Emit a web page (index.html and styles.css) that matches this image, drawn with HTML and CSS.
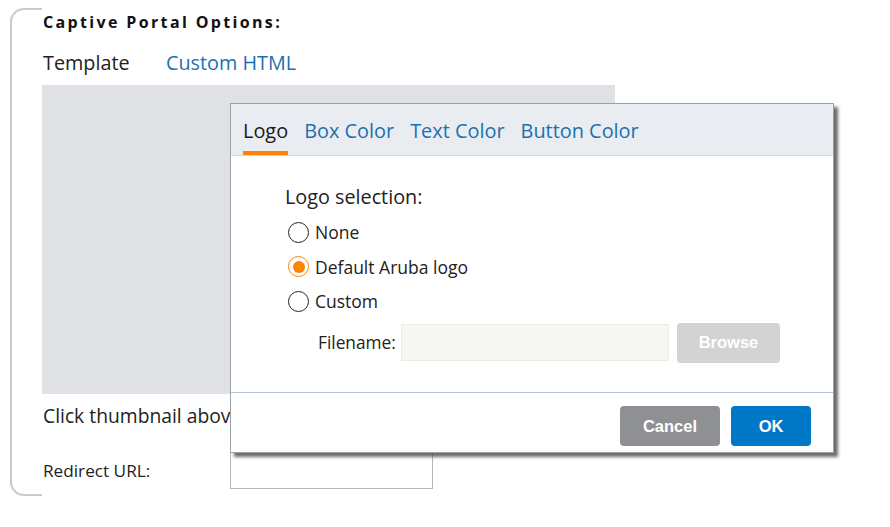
FILE: index.html
```html
<!DOCTYPE html>
<html>
<head>
<meta charset="utf-8">
<link rel="stylesheet" href="styles.css">
</head>
<body>
<div class="page">
  <section class="options">
    <h2 class="title">Captive Portal Options:</h2>
    <div class="template-row">
      <span class="label">Template</span>
      <a class="link">Custom HTML</a>
    </div>
    <div class="thumb"></div>
    <p class="hint">Click thumbnail above to customize the captive portal page.</p>
    <div class="redirect-row">
      <span class="small-label">Redirect URL:</span>
      <div class="url-input"></div>
    </div>
  </section>

  <div class="dialog">
    <div class="tabs">
      <span class="tab active">Logo</span>
      <span class="tab">Box Color</span>
      <span class="tab">Text Color</span>
      <span class="tab">Button Color</span>
    </div>
    <div class="dialog-body">
      <div class="heading">Logo selection:</div>
      <div class="radio-row"><span class="radio"></span><span>None</span></div>
      <div class="radio-row"><span class="radio checked"></span><span>Default Aruba logo</span></div>
      <div class="radio-row"><span class="radio"></span><span>Custom</span></div>
      <div class="file-row">
        <span class="file-label">Filename:</span>
        <div class="file-input"></div>
        <span class="btn btn-browse">Browse</span>
      </div>
    </div>
    <div class="dialog-footer">
      <span class="btn btn-cancel">Cancel</span>
      <span class="btn btn-ok">OK</span>
    </div>
  </div>
</div>
</body>
</html>
```
FILE: styles.css
```css
html, body {
  margin: 0;
  padding: 0;
  background: #ffffff;
}
body {
  font-family: "Open Sans", "Noto Sans", sans-serif;
  color: #222222;
  width: 890px;
  height: 527px;
  overflow: hidden;
}
.page {
  position: relative;
  width: 890px;
  height: 527px;
}
.options {
  position: relative;
  margin: 0;
  padding: 11px 0 0 43px;
  width: 572px;
  height: 484px;
  box-sizing: content-box;
}
.options::before {
  content: "";
  position: absolute;
  left: 10px;
  top: 8px;
  width: 32px;
  height: 488px;
  border: 2px solid #c9cacd;
  border-right: none;
  border-radius: 14px 0 0 14px;
  box-sizing: border-box;
}
.title {
  margin: 0;
  font-size: 16px;
  font-weight: 700;
  letter-spacing: 2.35px;
  line-height: 22px;
  color: #111111;
}
.template-row {
  display: flex;
  align-items: baseline;
  margin-top: 18px;
  height: 30px;
  font-size: 19.8px;
  line-height: 24px;
}
.label {
  width: 123px;
  color: #222222;
}
.link {
  color: #1c70ae;
}
.thumb {
  margin-top: 4px;
  margin-left: -1px;
  width: 573px;
  height: 309px;
  background: #e0e1e5;
}
.hint {
  margin: 10px 0 0 0;
  font-size: 19.3px;
  line-height: 24px;
  white-space: nowrap;
  color: #222222;
}
.redirect-row {
  display: flex;
  align-items: center;
  margin-top: 25px;
  height: 36px;
}
.small-label {
  font-size: 17.2px;
  line-height: 22px;
  padding-bottom: 1px;
  width: 187px;
}
.url-input {
  width: 203px;
  height: 36px;
  border: 1px solid #b3b6bc;
  border-top: none;
  box-sizing: border-box;
}
.dialog {
  position: absolute;
  left: 230px;
  top: 103px;
  width: 604px;
  height: 350px;
  background: #ffffff;
  border: 1px solid #9ba1a8;
  box-sizing: border-box;
  box-shadow: 4px 4px 3px rgba(60, 60, 60, 0.75);
  display: flex;
  flex-direction: column;
}
.tabs {
  display: flex;
  align-items: flex-end;
  gap: 16px;
  height: 51px;
  padding-left: 12px;
  background: #e9ecf1;
  border-bottom: 1px solid #d4d8dd;
  font-size: 19.9px;
}
.tab {
  color: #1c70ae;
  line-height: 24px;
  padding-bottom: 8px;
  border-bottom: 4px solid transparent;
}
.tab.active {
  color: #1a1a1a;
  border-bottom-color: #ff8300;
}
.dialog-body {
  flex: 1;
  padding: 28px 0 0 54px;
  border-bottom: 1px solid #b6c3d1;
}
.heading {
  font-size: 19.8px;
  line-height: 26px;
  color: #222222;
  margin-bottom: 5px;
}
.radio-row {
  display: flex;
  align-items: center;
  gap: 6px;
  height: 34.5px;
  margin-left: 3px;
  font-size: 17.5px;
  color: #222222;
}
.radio {
  width: 21px;
  height: 21px;
  border: 1.3px solid #222222;
  border-radius: 50%;
  box-sizing: border-box;
  display: flex;
  align-items: center;
  justify-content: center;
  background: #ffffff;
}
.radio.checked {
  border-color: #ff8300;
  border-width: 1px;
}
.radio.checked::after {
  content: "";
  width: 12px;
  height: 12px;
  border-radius: 50%;
  background: #ff8300;
}
.file-row {
  display: flex;
  align-items: center;
  margin-top: 4px;
  margin-left: 33px;
}
.file-label {
  font-size: 17.3px;
  width: 83px;
}
.file-input {
  width: 268px;
  height: 37px;
  background: #f6f7f3;
  border: 1px solid #ebebe8;
  box-sizing: border-box;
}
.btn {
  display: flex;
  align-items: center;
  justify-content: center;
  font-family: "Liberation Sans", Arial, sans-serif;
  font-weight: 700;
  font-size: 16.5px;
  color: #ffffff;
  border-radius: 4px;
}
.btn-browse {
  margin-left: 8px;
  width: 103px;
  height: 40px;
  background: #d2d3d5;
}
.dialog-footer {
  height: 59px;
  display: flex;
  align-items: flex-start;
  justify-content: flex-end;
  gap: 11px;
  padding-top: 13px;
  padding-right: 22px;
  box-sizing: border-box;
}
.btn-cancel {
  width: 100px;
  height: 40px;
  background: #8e9094;
}
.btn-ok {
  width: 80px;
  height: 40px;
  background: #0078c8;
}
```
